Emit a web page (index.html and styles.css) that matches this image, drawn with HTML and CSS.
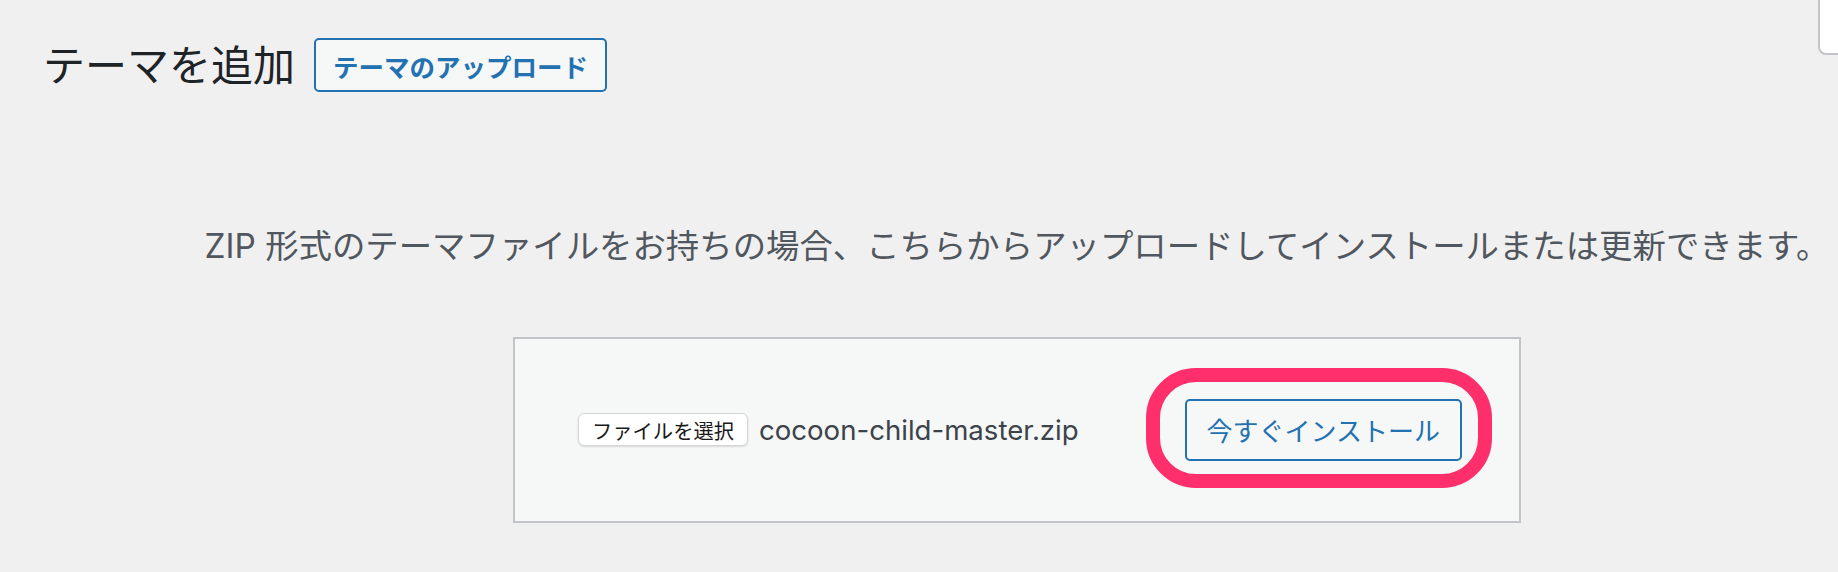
FILE: index.html
```html
<!DOCTYPE html>
<html lang="ja">
<head>
<meta charset="utf-8">
<title>テーマを追加</title>
<link rel="stylesheet" href="styles.css">
</head>
<body>
<div class="screen-tab"></div>
<div class="wrap">
  <div class="page-header">
    <h1 class="page-title">テーマを追加</h1>
    <a class="title-action" href="#">テーマのアップロード</a>
  </div>
  <section class="upload">
    <p class="install-help">ZIP 形式のテーマファイルをお持ちの場合、こちらからアップロードしてインストールまたは更新できます。</p>
    <form class="upload-form">
      <div class="file-input">
        <span class="file-button">ファイルを選択</span>
        <span class="file-name">cocoon-child-master.zip</span>
      </div>
      <div class="highlight">
        <button type="button" class="install-button">今すぐインストール</button>
      </div>
    </form>
  </section>
</div>
</body>
</html>
```

FILE: styles.css
```css
html, body {
  margin: 0;
  padding: 0;
  background: #f0f0f1;
  height: 100%;
  overflow: hidden;
}

body {
  font-family: Inter, "Noto Sans CJK JP", sans-serif;
  color: #3c434a;
  position: relative;
}

.screen-tab {
  position: absolute;
  top: -2px;
  left: 1818px;
  width: 60px;
  height: 57px;
  background: #fff;
  border: 2px solid #c3c4c7;
  border-radius: 0 0 8px 8px;
  box-sizing: border-box;
}

.wrap {
  padding-left: 43px;
}

.page-header {
  display: flex;
  align-items: center;
  margin-top: 38px;
  height: 54px;
}

.page-title {
  margin: 0;
  font-family: "Noto Sans CJK JP", sans-serif;
  font-size: 42px;
  font-weight: 400;
  line-height: 50px;
  color: #1d2327;
  position: relative;
  top: -2px;
}

.title-action {
  margin-left: 19px;
  height: 54px;
  box-sizing: border-box;
  display: flex;
  align-items: center;
  padding: 0 17px;
  border: 2px solid #2271b1;
  border-radius: 5px;
  background: #f6f7f7;
  color: #2271b1;
  font-family: "Noto Sans CJK JP", sans-serif;
  font-size: 25.5px;
  font-weight: 700;
  text-decoration: none;
  white-space: nowrap;
}

.upload {
  display: flex;
  flex-direction: column;
  align-items: flex-start;
  margin-left: -43px;
}

.install-help {
  align-self: stretch;
  margin: 130px 0 0;
  padding-left: 196px;
  text-align: center;
  font-size: 33.4px;
  line-height: 49.5px;
  color: #50575e;
  white-space: nowrap;
}

.upload-form {
  margin: 65px 0 0 513px;
  width: 1008px;
  height: 186px;
  box-sizing: border-box;
  display: flex;
  align-items: center;
  justify-content: space-between;
  padding: 0 57px 0 63px;
  background: #f6f7f7;
  border: 2px solid #c3c4c7;
}

.file-input {
  display: flex;
  align-items: center;
  gap: 11px;
}

.file-button {
  display: flex;
  align-items: center;
  height: 33px;
  box-sizing: border-box;
  padding: 0 13px;
  background: #fff;
  border: 1px solid #d6d6d6;
  border-radius: 6px;
  box-shadow: 0 1px 2px rgba(0, 0, 0, 0.12);
  font-family: "Noto Sans CJK JP", sans-serif;
  font-size: 20.3px;
  color: #1a1a1a;
}

.file-name {
  font-family: Inter, sans-serif;
  font-size: 27.6px;
  color: #3c434a;
}

.highlight {
  position: relative;
  display: flex;
}

.highlight::before {
  content: "";
  position: absolute;
  left: -39px;
  right: -30px;
  top: -31px;
  bottom: -27px;
  border: 14px solid #ff2f6b;
  border-radius: 50px;
  pointer-events: none;
}

.install-button {
  height: 62px;
  box-sizing: border-box;
  padding: 0 20px;
  background: #f6f7f7;
  border: 2px solid #2271b1;
  border-radius: 5px;
  color: #2271b1;
  font-family: "Noto Sans CJK JP", sans-serif;
  font-size: 26px;
  font-weight: 400;
  white-space: nowrap;
}
```
